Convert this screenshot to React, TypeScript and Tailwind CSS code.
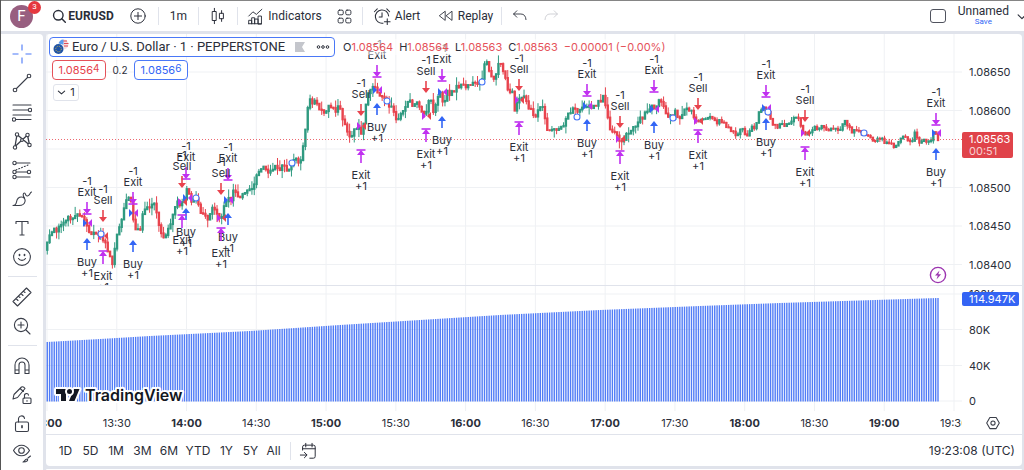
import React from "react";

const INK = "#2a2e39";
const GREEN = "#2f9a80";
const RED = "#e8434d";
const BLUE = "#3265f5";
const PURPLE = "#c030f0";

type Pt = [number, number];

const pricePath: Pt[] = [
  [47, 242], [50, 233], [60, 227], [65, 218], [73, 217], [78, 212], [82, 215], [85, 222], [88, 230], [92, 235],
  [100, 233], [103, 238], [107, 248], [111, 260], [113, 264], [115, 243], [118, 233], [122, 218], [125, 202],
  [127, 197], [131, 202], [133, 218], [135, 229], [141, 231], [143, 210], [150, 208], [155, 204], [157, 217],
  [161, 230], [163, 237], [167, 232], [172, 220], [176, 203], [183, 203], [187, 189], [191, 202], [195, 197],
  [198, 205], [202, 215], [208, 220], [213, 206], [218, 217], [222, 218], [225, 200], [232, 198], [233, 190],
  [238, 198], [243, 193], [253, 187], [257, 173], [263, 165], [270, 172], [275, 167], [280, 172], [283, 163],
  [287, 169], [292, 165], [297, 157], [299, 166], [303, 148], [305, 135], [307, 107], [310, 100], [315, 103],
  [320, 108], [325, 112], [330, 105], [335, 113], [339, 105], [343, 122], [347, 128], [350, 140], [355, 128],
  [358, 126], [362, 138], [365, 110], [368, 95], [373, 88], [378, 92], [382, 98], [387, 102], [392, 108],
  [397, 120], [403, 112], [408, 100], [413, 105], [418, 103], [423, 115], [427, 112], [430, 93], [433, 112],
  [437, 98], [440, 93], [443, 105], [447, 93], [453, 93], [457, 85], [467, 85], [477, 83], [482, 82], [484, 62],
  [488, 65], [492, 80], [497, 70], [500, 62], [503, 70], [508, 90], [513, 90], [515, 112], [518, 100], [525, 98],
  [530, 110], [535, 115], [540, 108], [544, 107], [546, 128], [553, 132], [558, 127], [562, 127], [567, 118],
  [572, 108], [577, 112], [582, 105], [587, 107], [593, 107], [600, 100], [603, 97], [606, 110], [610, 128],
  [615, 133], [618, 140], [623, 140], [630, 132], [637, 122], [643, 117], [650, 108], [657, 107], [660, 97],
  [663, 107], [668, 117], [673, 118], [676, 108], [679, 122], [683, 112], [692, 109], [695, 120], [703, 120],
  [712, 118], [717, 122], [723, 122], [730, 128], [736, 137], [742, 128], [748, 137], [752, 128], [757, 125],
  [759, 110], [763, 108], [768, 108], [770, 120], [777, 127], [783, 123], [788, 125], [793, 118], [800, 118],
  [802, 133], [805, 135], [810, 132], [815, 127], [823, 127], [828, 133], [833, 128], [838, 132], [845, 123],
  [850, 125], [853, 133], [858, 130], [863, 133], [870, 135], [873, 142], [880, 140], [887, 141], [893, 145],
  [897, 145], [900, 136], [905, 138], [908, 142], [913, 138], [916, 130], [918, 142], [925, 141], [930, 140],
  [934, 133], [938, 138],
];

const volumePath: Pt[] = [
  [47, 342], [100, 339], [150, 336], [190, 334], [250, 331], [340, 325], [500, 315], [600, 310], [700, 306],
  [780, 303], [938, 298],
];

function interpolate(path: Pt[], x: number): number {
  for (let i = 1; i < path.length; i++) {
    if (x <= path[i][0]) {
      const [x0, y0] = path[i - 1];
      const [x1, y1] = path[i];
      return y0 + ((y1 - y0) * (x - x0)) / (x1 - x0);
    }
  }
  return path[path.length - 1][1];
}

const rand = (n: number) => {
  const s = Math.sin(n * 127.1 + 11.7) * 43758.5453;
  return s - Math.floor(s);
};

const STEP = 2.3257;
const COUNT = 384;
const barX = (i: number) => 938 - (COUNT - 1 - i) * STEP;

const candles = Array.from({ length: COUNT }, (_, i) => {
  const x = barX(i);
  const open = interpolate(pricePath, x - STEP) + (rand(i - 1) - 0.5) * 5;
  const close = interpolate(pricePath, x) + (rand(i) - 0.5) * 5;
  const calm = x > 690 ? 0.5 : 1;
  return {
    x,
    up: close < open,
    top: Math.min(open, close) - 0.8,
    bottom: Math.max(open, close) + 1,
    high: Math.min(open, close) - rand(i + 900) ** 2 * 9 * calm,
    low: Math.max(open, close) + rand(i + 500) ** 2 * 9 * calm,
  };
});

const exitShort: Pt[] = [[87, 214], [133, 204], [186, 179], [228, 180], [377, 77], [442, 81], [587, 96], [654, 92], [766, 97], [936, 125]];
const sells: Pt[] = [[103, 222], [182, 188], [221, 195], [361, 116], [426, 93], [519, 91], [620, 128], [698, 110], [805, 122]];
const buys: Pt[] = [[87, 238], [133, 240], [186, 208], [228, 213], [377, 103], [442, 116], [587, 119], [654, 121], [766, 118], [936, 148]];
const exitLong: Pt[] = [[103, 251], [182, 215], [221, 228], [361, 150], [426, 129], [519, 122], [620, 151], [698, 130], [805, 147]];
const rings: Pt[] = [[101, 234], [196, 198], [292, 163], [387, 101], [482, 82], [577, 117], [673, 118], [768, 112], [864, 133]];
const buyTicks: Pt[] = [[87, 223], [133, 213], [187, 198], [228, 200], [377, 90], [442, 92], [587, 106], [654, 109], [766, 108], [936, 133]];
const sellTicks: Pt[] = [[103, 236], [182, 202], [221, 218], [361, 126], [426, 116], [519, 100], [620, 139], [698, 121], [805, 133]];

function Caption({ x, y, children }: { x: number; y: number; children: React.ReactNode }) {
  return (
    <text x={x} y={y + 4} textAnchor="middle" fontSize="11" fill={INK}>
      {children}
    </text>
  );
}

function DownMarker({ x, y, label, color, bar }: { x: number; y: number; label: string; color: string; bar?: boolean }) {
  return (
    <g>
      <Caption x={x} y={y - 33}>-1</Caption>
      <Caption x={x} y={y - 22}>{label}</Caption>
      <path d={`M${x} ${y - 12}V${y - 3}`} stroke={color} strokeWidth="1.6" />
      <path d={`M${x - 4} ${y - 5}h8l-4 5z`} fill={color} />
      {bar && <path d={`M${x - 4.5} ${y}h9`} stroke={color} strokeWidth="1.6" />}
    </g>
  );
}

function UpMarker({ x, y, label, color, bar }: { x: number; y: number; label: string; color: string; bar?: boolean }) {
  const d = bar ? 1 : 0;
  return (
    <g>
      <path d={`M${x} ${y + 3}V${y + 12 + d}`} stroke={color} strokeWidth="1.6" />
      <path d={`M${x - 4} ${y + 5}h8l-4 -5z`} fill={color} />
      {bar && <path d={`M${x - 4.5} ${y}h9`} stroke={color} strokeWidth="1.6" />}
      <Caption x={x} y={y + 24 + d}>{label}</Caption>
      <Caption x={x} y={y + 35 + d}>+1</Caption>
    </g>
  );
}

const times = ["13:00", "13:30", "14:00", "14:30", "15:00", "15:30", "16:00", "16:30", "17:00", "17:30", "18:00", "18:30", "19:00", "19:30"];
const timeX = (i: number) => 47 + i * 69.77;
const prices = [
  { label: "1.08650", y: 72 },
  { label: "1.08600", y: 110.5 },
  { label: "", y: 149 },
  { label: "1.08500", y: 187.5 },
  { label: "1.08450", y: 226 },
  { label: "1.08400", y: 264.5 },
];
const volumes = [
  { label: "120K", y: 294 },
  { label: "80K", y: 329.5 },
  { label: "40K", y: 365.5 },
  { label: "0", y: 401 },
];

function Chart() {
  return (
    <svg viewBox="46 34 976 400" className="block w-full" role="img" aria-label="EURUSD price chart">
      <defs>
        <clipPath id="plot"><rect x="46" y="34" width="917" height="251" /></clipPath>
        <clipPath id="axis"><rect x="46" y="411" width="916" height="23" /></clipPath>
      </defs>
      <g stroke="#eff1f4">
        {times.map((t, i) => <path key={t} d={`M${timeX(i)} 34V411`} />)}
        {[...prices, ...volumes].map((p) => <path key={p.y} d={`M46 ${p.y}H962`} />)}
      </g>
      <g fill={BLUE} fillOpacity="0.85">
        {candles.map((c, i) => {
          const top = interpolate(volumePath, c.x);
          return <rect key={i} x={c.x - 0.7} y={top} width="1.4" height={401.5 - top} />;
        })}
      </g>
      <g clipPath="url(#plot)">
        {candles.map((c, i) => (
          <g key={i} fill={c.up ? GREEN : RED}>
            <rect x={c.x - 0.5} y={c.high} width="1" height={c.low - c.high} />
            <rect x={c.x - 1.2} y={c.top} width="2.4" height={c.bottom - c.top} />
          </g>
        ))}
        <path d="M46 139.5H962" stroke={RED} strokeDasharray="1 2" strokeOpacity="0.8" />
        {buyTicks.map(([x, y]) => (
          <g key={x}>
            <path d={`M${x - 4} ${y - 4}v8l4 -4z`} fill={BLUE} />
            <path d={`M${x + 5} ${y - 4}v8l-4 -4z`} fill={PURPLE} />
          </g>
        ))}
        {sellTicks.map(([x, y]) => (
          <g key={x}>
            <path d={`M${x - 4} ${y - 4}v8l4 -4z`} fill={PURPLE} />
            <path d={`M${x + 5} ${y - 4}v8l-4 -4z`} fill={RED} />
          </g>
        ))}
        {rings.map(([x, y]) => <circle key={x} cx={x} cy={y} r="3" fill="#fff" stroke="#4a78f7" strokeWidth="1.1" />)}
        {exitShort.map(([x, y]) => <DownMarker key={x} x={x} y={y} label="Exit" color={PURPLE} bar />)}
        {sells.map(([x, y]) => <DownMarker key={x} x={x} y={y} label="Sell" color={RED} />)}
        {buys.map(([x, y]) => <UpMarker key={x} x={x} y={y} label="Buy" color={BLUE} />)}
        {exitLong.map(([x, y]) => <UpMarker key={x} x={x} y={y} label="Exit" color={PURPLE} bar />)}
      </g>
      <circle cx="938" cy="275" r="7.6" fill="#fff" stroke="#9c35b0" strokeWidth="1.4" />
      <path d="M939.5 270.5l-4.5 5h2.8l-1.3 4 4.6 -5.2h-2.8z" fill="#9c35b0" />
      <path d="M46 285.5H1022" stroke="#e0e3eb" />
      <g fontSize="11" fill={INK}>
        {[...prices, ...volumes].map((p) => <text key={p.y} x="969" y={p.y + 4}>{p.label}</text>)}
      </g>
      <rect x="962" y="132" width="51" height="26" rx="2" fill="#e0434a" />
      <text x="969" y="143" fontSize="11" fill="#fff">1.08563</text>
      <text x="969" y="155" fontSize="11" fill="#fff" fillOpacity="0.75">00:51</text>
      <rect x="962" y="292" width="57" height="14" rx="2" fill="#3464f4" />
      <text x="969" y="303" fontSize="11" fill="#fff">114.947K</text>
      <g clipPath="url(#axis)" fontSize="11" textAnchor="middle" fill={INK}>
        {times.map((t, i) => (
          <text key={t} x={timeX(i)} y="427" fontWeight={i % 2 ? 400 : 700}>{t}</text>
        ))}
      </g>
      <g stroke="#fff" strokeWidth="4" strokeLinejoin="round" paintOrder="stroke" fill="#131722">
        <path d="M56 389h10v12h-5v-7h-5zM79.500 389l-5 12h-5.500l5 -12z" />
        <circle cx="69.500" cy="391.500" r="2.500" />
        <text x="85" y="401" fontSize="16" fontWeight="600">TradingView</text>
      </g>
    </svg>
  );
}

function Icon({ children, size = 20, className = "" }: { children: React.ReactNode; size?: number; className?: string }) {
  return (
    <svg width={size} height={size} viewBox="0 0 20 20" fill="none" stroke="currentColor" strokeWidth="1.1" strokeLinecap="round" strokeLinejoin="round" aria-hidden="true" className={className}>
      {children}
    </svg>
  );
}

const toolGroups: { name: string; art: React.ReactNode }[][] = [
  [
    { name: "Cross", art: <path stroke="#4a78f7" strokeLinecap="butt" d="M10 .5v6M10 13.500v6M.5 10h6M13.500 10h6" /> },
    { name: "Trend line", art: <><path d="M4.500 15.500l11-11" /><circle cx="3" cy="17" r="1.800" /><circle cx="17" cy="3" r="1.800" /></> },
    { name: "Fib retracement", art: <><path d="M1 3h18M1 8h16M1 13h18M3 17.500h16" /><circle cx="18" cy="8" r="1.700" fill="#fff" /><circle cx="2" cy="17.500" r="1.700" fill="#fff" /></> },
    { name: "Patterns", art: <><path d="M5 3.500L3 15.500L15.500 4L17.500 14L5 3.500" strokeWidth="1.300" /><g fill="#fff"><circle cx="5" cy="3.500" r="1.700" /><circle cx="3" cy="16.500" r="1.700" /><circle cx="15.500" cy="4" r="1.700" /><circle cx="17.500" cy="14" r="1.700" /><circle cx="10" cy="9" r="1.400" /></g></> },
    { name: "Forecasting", art: <><path d="M3 3h15M3 12h13M3 17h15" /><path d="M4 10l12-5" strokeDasharray="1 2" /><g fill="#fff"><circle cx="2.500" cy="3" r="1.700" /><circle cx="2.500" cy="12" r="1.700" /><circle cx="2.500" cy="17" r="1.700" /><circle cx="17" cy="12" r="1.700" /></g></> },
    { name: "Brush", art: <path d="M1 16.500c2 0 3-1 3.500-3.500C5 10 7 8 9.500 8c2.500 0 4 2 3.500 4.500S10 16.500 7 16.500zM12.500 9c-2-2-1.500-5 0-5s.5 3.500 3 3 2-3 4-4" /> },
    { name: "Text", art: <path strokeLinecap="butt" d="M4 6V3.500h12V6M10 3.500V17M7.500 17h5" /> },
    { name: "Icons", art: <><circle cx="10" cy="10" r="8.400" /><path d="M6.500 11.500c1.500 2.500 5.500 2.500 7 0" /><path d="M7.500 7.500v.8M12.500 7.500v.8" strokeWidth="1.700" /></> },
  ],
  [
    { name: "Measure", art: <path d="M1 14.500L14.500 1L19 5.500L5.500 19zM4 11.500l2 2M6.500 9l1.500 1.500M9 6.500l2 2M11.500 4l1.500 1.500" /> },
    { name: "Zoom in", art: <><circle cx="9" cy="9" r="6.600" /><path d="M14 14l4 4M9 6v6M6 9h6" /></> },
  ],
  [
    { name: "Magnet", art: <path d="M3 17.500V9a7 7 0 0 1 14 0v8.500h-4V9a3 3 0 0 0-6 0v8.500zM3 14h4M13 14h4" /> },
    { name: "Stay in drawing mode", art: <><path d="M1 14l1-4.500L9.500 2q2-1 3.500 1.500L5.500 12.500zM8 3.500l3.500 3" /><rect x="11" y="13" width="8" height="5.500" rx="1" /><path d="M12.500 13v-2a2 2 0 0 1 4-.8M15 15.500v.8" /></> },
    { name: "Lock all drawings", art: <><rect x="3.500" y="8" width="13" height="9.500" rx="1.500" /><path d="M6.500 8V5.500a3 3 0 0 1 6-1" /><path d="M10 11.800v1.700" strokeWidth="1.700" /></> },
    { name: "Hide all drawings", art: <><path d="M1.500 7.500c4-7 12-7 16 0c-4 7-12 7-16 0z" /><circle cx="9.500" cy="7.500" r="2.800" /><path d="M11 19c2 0 1.500-3 4-3c1.500 1 .5 3-4 3zM16 15l2.500-2" /></> },
  ],
];

function Divider() {
  return <span className="block h-[18px] w-px shrink-0 bg-[#e0e3eb]" />;
}

const topButton = "flex h-full shrink-0 items-center justify-center";

function Header() {
  return (
    <header className="flex h-[31px] items-center border-t border-[#858585] bg-white font-['Roboto',sans-serif] text-[12px] text-[#2a2e39]">
      <button aria-label="Account" className="relative ml-[9px] flex size-[23px] shrink-0 items-center justify-center rounded-full bg-[#985f80] text-[15px] leading-none text-white">
        F
        <span className="absolute -top-[4px] left-[18px] flex size-[13px] items-center justify-center rounded-full bg-[#e5383f] text-[8px]">3</span>
      </button>
      <button className={`${topButton} ml-[18px] w-[64px] gap-[2px] font-bold`}>
        <Icon size={14}><circle cx="9" cy="9" r="6.800" strokeWidth="2" /><path d="M14 14l5 5" strokeWidth="2" /></Icon>
        EURUSD
      </button>
      <button aria-label="Compare symbol" className={`${topButton} ml-[2px] w-[41px]`}>
        <Icon size={18}><circle cx="10" cy="10" r="8" /><path d="M10 6v8M6 10h8" /></Icon>
      </button>
      <Divider />
      <button className={`${topButton} w-[39px]`}>1m</button>
      <Divider />
      <button aria-label="Chart type" className={`${topButton} w-[38px]`}>
        <Icon size={18}><rect x="4" y="5" width="4" height="10" /><path d="M6 1.500V5M6 15v3.500M14 4v3M14 13v3" /><rect x="12" y="7" width="4" height="6" /></Icon>
      </button>
      <Divider />
      <button className={`${topButton} w-[93px] gap-[4px]`}>
        <Icon size={17}><path d="M2 18.500V14.500h3.500v4M5.500 18.500V11.500H9v7M9 18.500V13h4v5.500M13 18.500V9.500h4v9zM2 18.500h15M2 9.500l5-5 4 3 6.500-6" /></Icon>
        Indicators
      </button>
      <button aria-label="Layouts" className={`${topButton} w-[26px]`}>
        <Icon size={17}><rect x="2.500" y="2.500" width="6" height="5.500" rx="1.500" /><rect x="11.500" y="2.500" width="6" height="5.500" rx="1.500" /><rect x="2.500" y="12" width="6" height="5.500" rx="1.500" /><rect x="11.500" y="12" width="6" height="5.500" rx="1.500" /></Icon>
      </button>
      <span className="w-[5px] shrink-0" />
      <Divider />
      <button className={`${topButton} w-[67px] gap-[3px]`}>
        <Icon size={19}><path d="M16.500 9.500a7 7 0 1 0-6 7.500M9.500 6v4.500H6.500M1.500 5l3-3M14.500 2l3 3M15 12.500v6M12 15.500h6" /></Icon>
        Alert
      </button>
      <button className={`${topButton} w-[71px] gap-[4px]`}>
        <Icon size={16}><path d="M9 4.500v11L2 10zM17.500 4.500v11L10.500 10z" /></Icon>
        Replay
      </button>
      <Divider />
      <button aria-label="Undo" className={`${topButton} w-[36px]`}>
        <Icon size={16}><path d="M6 3.500L2 7.500l4 4M2 7.500h9q6 0 6.500 7" /></Icon>
      </button>
      <button aria-label="Redo" disabled className={`${topButton} w-[26px] text-[#c9cbd0]`}>
        <Icon size={16}><path d="M14 3.500l4 4-4 4M18 7.500H9q-6 0-6.500 7" /></Icon>
      </button>
      <span className="flex-1" />
      <button aria-label="Layout setup" className={`${topButton} mr-[11px] w-[18px]`}>
        <span className="h-[14px] w-[16px] rounded-[3px] border border-[#50535e]" />
      </button>
      <button className="flex shrink-0 flex-col items-center">
        <span className="text-[12px] leading-[12px]">Unnamed</span>
        <span className="text-[8px] leading-[10px] text-[#3265f5]">Save</span>
      </button>
      <button aria-label="Manage layouts" className="ml-[8px] w-[7px] shrink-0 overflow-hidden">
        <Icon size={11} className="max-w-none"><path d="M2 7l7 7 7-7" strokeWidth="2" /></Icon>
      </button>
    </header>
  );
}

function Toolbar() {
  return (
    <nav aria-label="Drawing tools" className="flex w-[42px] shrink-0 flex-col items-center rounded-tr bg-white pt-[5px] text-[#3a3e49]">
      {toolGroups.map((group, g) => (
        <React.Fragment key={g}>
          {g > 0 && <span className="my-[5px] h-px w-[29px] shrink-0 bg-[#e0e3eb]" />}
          {group.map((tool) => (
            <button key={tool.name} aria-label={tool.name} className="flex h-[29px] w-full shrink-0 items-center justify-center">
              <Icon>{tool.art}</Icon>
            </button>
          ))}
        </React.Fragment>
      ))}
    </nav>
  );
}

const quotes = [["O", "1.08564"], ["H", "1.08564"], ["L", "1.08563"], ["C", "1.08563"]];

function Legend() {
  return (
    <div className="absolute top-[3px] left-[3px] text-[#2a2e39]">
      <div className="flex items-center">
        <div className="flex h-[20px] w-[286px] items-center rounded-[4px] border border-[#4a78f7] bg-white pl-[3px] font-['Roboto',sans-serif] text-[13px] whitespace-nowrap">
          <svg width="16" height="16" viewBox="0 0 16 16" aria-hidden="true" className="mr-[3px] shrink-0">
            <circle cx="10.500" cy="5.500" r="5" fill="#f6dfe1" />
            <path d="M10 2h4M11 4.500h4.500M11 7h4" stroke="#e14b55" strokeWidth="1.200" />
            <path d="M5.500 5.500A5 5 0 0 1 10.500 .5v5z" fill="#5c9df0" />
            <circle cx="5.500" cy="10" r="5.500" fill="#fff" />
            <circle cx="5.500" cy="10" r="5" fill="#1f53a6" />
            <circle cx="5.500" cy="10" r="2.800" fill="none" stroke="#d5b94a" strokeDasharray="1 1.200" />
          </svg>
          <span className="flex-1">Euro / U.S. Dollar · 1 · PEPPERSTONE</span>
          <svg width="10" height="10" viewBox="0 0 10 10" aria-hidden="true" className="mr-[11px] shrink-0"><path d="M0 0h10L7 5l3 5H0z" fill="#c4c6cc" /></svg>
          <button aria-label="More" className="mr-[4px] shrink-0">
            <svg width="14" height="6" viewBox="0 0 14 6" fill="none" stroke="#2a2e39" aria-hidden="true"><circle cx="2.500" cy="3" r="1.300" /><circle cx="7" cy="3" r="1.300" /><circle cx="11.500" cy="3" r="1.300" /></svg>
          </button>
        </div>
        <div className="ml-[6px] flex gap-[6px] bg-white/50 pl-[2px] text-[11px] whitespace-nowrap">
          {quotes.map(([k, v]) => (
            <span key={k}>{k}<span className="text-[#e5525a]">{v}</span></span>
          ))}
          <span className="text-[#e5525a]">−0.00001 (−0.00%)</span>
        </div>
      </div>
      <div className="mt-[3px] ml-[3px] flex items-center text-[11px]">
        <button className="flex h-[20px] w-[54px] items-center justify-center rounded-[4px] border border-[#e5525a] bg-white text-[#e5434c]">1.0856<span className="mb-[3px] text-[10px]">4</span></button>
        <span className="w-[28px] text-center text-[10px]">0.2</span>
        <button className="flex h-[20px] w-[54px] items-center justify-center rounded-[4px] border border-[#4a78f7] bg-white text-[#3265f5]">1.0856<span className="mb-[3px] text-[10px]">6</span></button>
      </div>
      <button aria-label="Collapse legend" className="mt-[4px] ml-[4px] flex h-[17px] w-[26px] items-center justify-center gap-[4px] rounded-[3px] border border-[#e0e3eb] bg-white text-[11px]">
        <Icon size={9}><path d="M3 7l7 6 7-6" strokeWidth="2.400" /></Icon>1
      </button>
    </div>
  );
}

const ranges = [
  { label: "1D", width: "w-[25px]" }, { label: "5D", width: "w-[25px]" }, { label: "1M", width: "w-[26px]" },
  { label: "3M", width: "w-[27px]" }, { label: "6M", width: "w-[26px]" }, { label: "YTD", width: "w-[32px]" },
  { label: "1Y", width: "w-[25px]" }, { label: "5Y", width: "w-[23px]" }, { label: "All", width: "w-[23px]" },
];

export default function App() {
  return (
    <div className="flex h-screen flex-col overflow-hidden border-l border-[#555] bg-[#e0e3eb] font-['Inter',sans-serif]">
      <Header />
      <div className="mt-[3px] flex min-h-0 flex-1 gap-[3px]">
        <Toolbar />
        <main className="flex min-w-0 flex-1 flex-col pr-[2px]">
          <section className="relative rounded-t bg-white">
            <Chart />
            <Legend />
            <button aria-label="Axis settings" className="absolute right-[22px] bottom-[4px] text-[#3a3e49]">
              <Icon size={14}><path d="M5.500 2h9l4.500 8-4.500 8h-9L1 10z" strokeWidth="1.500" /><circle cx="10" cy="10" r="3" strokeWidth="1.500" /></Icon>
            </button>
          </section>
          <footer className="flex h-[32px] shrink-0 items-center rounded-b border-t border-[#e0e3eb] bg-white px-[7px] text-[12px] text-[#2a2e39]">
            {ranges.map((r) => (
              <button key={r.label} className={`${r.width} text-center`}>{r.label}</button>
            ))}
            <span className="ml-[5px]"><Divider /></span>
            <button aria-label="Go to date" className="ml-[8px]">
              <Icon size={18}><path d="M4 9V5.500q0-2 2-2h10q2 0 2 2V16q0 2-2 2h-4M4 7.500h14M7.500 1.500v4M14.500 1.500v4M1.500 14.500h7M6 11.500l3 3-3 3" /></Icon>
            </button>
            <span className="ml-auto">19:23:08 (UTC)</span>
          </footer>
          <div className="mt-[3px] flex-1 rounded-t bg-white" />
        </main>
      </div>
    </div>
  );
}
